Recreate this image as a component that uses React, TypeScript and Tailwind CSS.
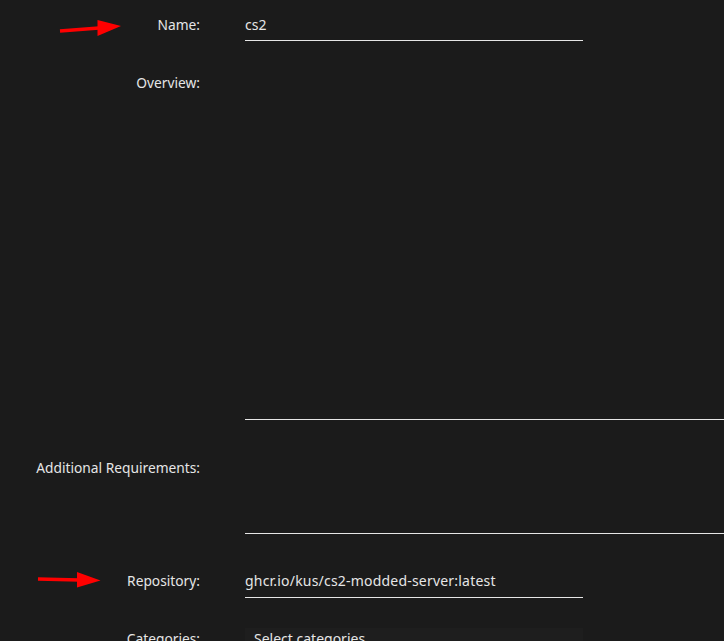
import React from "react";

const font = { fontFamily: '"Noto Sans", "Open Sans", sans-serif' };

function Label({ children }: { children: React.ReactNode }) {
  return (
    <div className="pt-px text-right text-[13.75px] leading-[20px] text-[#e6e6e6]">{children}</div>
  );
}

export default function App() {
  return (
    <div className="relative min-h-screen w-full overflow-hidden bg-[#1b1b1b]" style={font}>
      <div className="flex flex-col pt-[14px] pb-10">
        {/* Name */}
        <div className="grid grid-cols-[200px_1fr] gap-x-[45px] items-start">
          <Label>Name:</Label>
          <div className="w-[338px] h-[27px] pt-px border-b border-[#e6e6e6] text-[14px] leading-[20px] text-[#e6e6e6]">
            cs2
          </div>
        </div>

        {/* Overview */}
        <div className="mt-[31px] grid grid-cols-[200px_1fr] gap-x-[45px] items-start">
          <Label>Overview:</Label>
          <div className="h-[348px] border-b border-[#e6e6e6]" />
        </div>

        {/* Additional Requirements */}
        <div className="mt-[37px] grid grid-cols-[200px_1fr] gap-x-[45px] items-start">
          <Label>Additional Requirements:</Label>
          <div className="h-[77px] border-b border-[#e6e6e6]" />
        </div>

        {/* Repository */}
        <div className="mt-[36px] grid grid-cols-[200px_1fr] gap-x-[45px] items-start">
          <Label>Repository:</Label>
          <div className="w-[338px] h-[28px] pt-px border-b border-[#e6e6e6] text-[14px] leading-[20px] tracking-[0.2px] text-[#e6e6e6]">
            ghcr.io/kus/cs2-modded-server:latest
          </div>
        </div>

        {/* Categories */}
        <div className="mt-[30px] grid grid-cols-[200px_1fr] gap-x-[45px] items-start">
          <Label>Categories:</Label>
          <div className="w-[338px] h-[36px] pt-px bg-[#1e1e1e] px-[9px] text-[14px] leading-[20px] text-[#e6e6e6]">
            Select categories
          </div>
        </div>
      </div>

      {/* Pointer arrows */}
      <svg className="pointer-events-none absolute left-0 top-0" width="724" height="641">
        <line x1="60" y1="31" x2="99" y2="28" stroke="#ff0000" strokeWidth="3.5" />
        <polygon points="97.5,20 97.5,36 121,26" fill="#ff0000" />
        <line x1="38" y1="579" x2="79" y2="580" stroke="#ff0000" strokeWidth="3.5" />
        <polygon points="77,572 77,587.5 100.5,580.5" fill="#ff0000" />
      </svg>
    </div>
  );
}
